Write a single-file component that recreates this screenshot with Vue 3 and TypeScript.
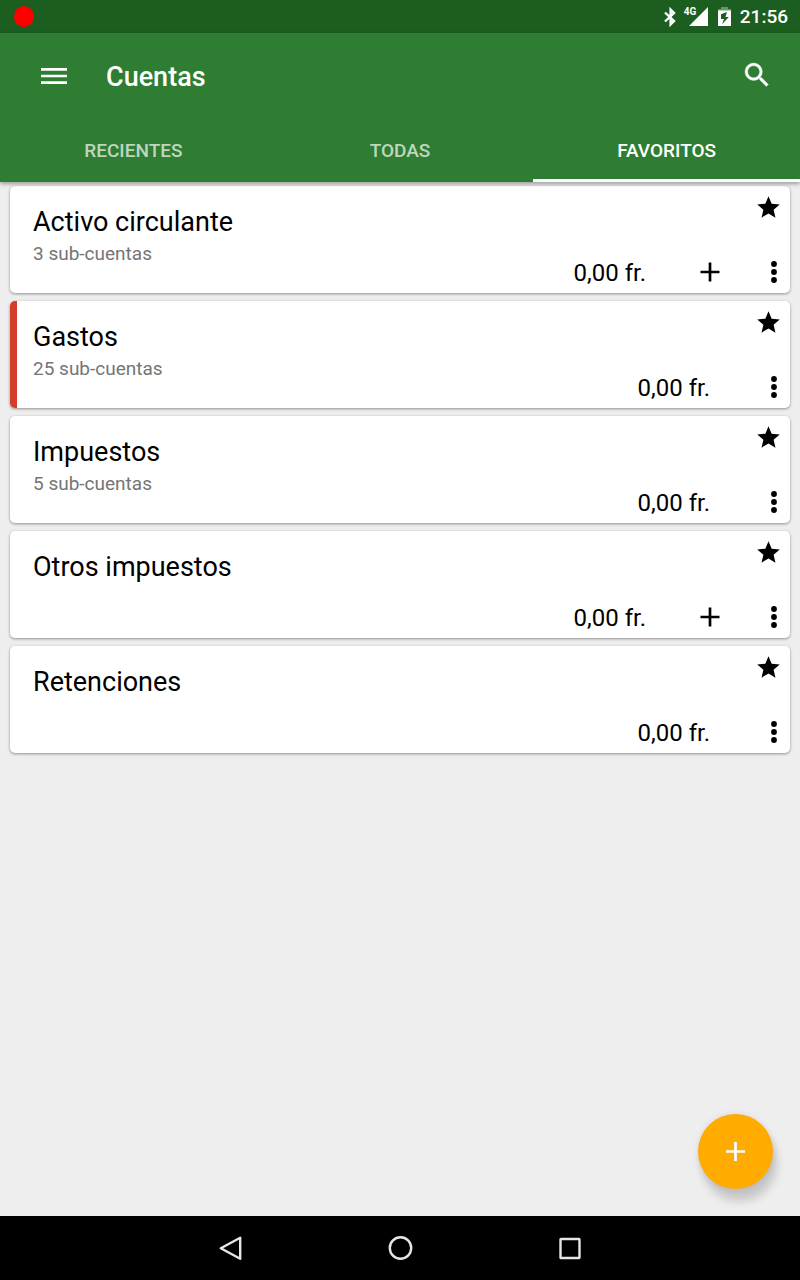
<script setup lang="ts">
import { ref } from 'vue'

interface Account {
  name: string
  children?: string
  balance: string
  canAdd: boolean
  color?: string
}

const tabs = ['Recientes', 'Todas', 'Favoritos']
const activeTab = ref(2)

const accounts: Account[] = [
  { name: 'Activo circulante', children: '3 sub-cuentas', balance: '0,00 fr.', canAdd: true },
  { name: 'Gastos', children: '25 sub-cuentas', balance: '0,00 fr.', canAdd: false, color: '#d43d2a' },
  { name: 'Impuestos', children: '5 sub-cuentas', balance: '0,00 fr.', canAdd: false },
  { name: 'Otros impuestos', balance: '0,00 fr.', canAdd: true },
  { name: 'Retenciones', balance: '0,00 fr.', canAdd: false },
]
</script>

<template>
  <div class="screen">
    <div class="status-bar">
      <span class="record-dot"></span>
      <div class="status-icons">
        <svg class="bluetooth" viewBox="0 0 12 20" width="12" height="20" aria-hidden="true">
          <path d="M1 5.5 L10 14 L6.6 17.4 V2.6 L10 6 L1 14.5" fill="none" stroke="#fff" stroke-width="2.4" />
        </svg>
        <div class="signal">
          <span class="network">4G</span>
          <svg viewBox="0 0 19 19" width="19" height="19" aria-hidden="true">
            <path d="M19 0 V19 H0 Z" fill="#fff" />
          </svg>
        </div>
        <svg class="battery" viewBox="0 0 13 19" width="13" height="19" aria-hidden="true">
          <path d="M3 0 H10 V2 H13 V4 H0 V2 H3 Z" fill="#fff" opacity="0.35" />
          <path fill-rule="evenodd" d="M0 3.5 H13 V19 H0 Z M9 5 L3 7.2 V12 H6 L4 17.2 L10.8 10 H7.4 Z" fill="#fff" />
        </svg>
        <span class="clock">21:56</span>
      </div>
    </div>

    <header class="app-bar">
      <div class="toolbar">
        <button class="icon-button" type="button" aria-label="Menú">
          <svg viewBox="0 0 32 32" width="32" height="32">
            <path d="M3 9.3 H29 M3 16 H29 M3 22.7 H29" stroke="#fff" stroke-width="2.7" />
          </svg>
        </button>
        <h1>Cuentas</h1>
        <button class="icon-button" type="button" aria-label="Buscar">
          <svg viewBox="0 0 24 24" width="32" height="32">
            <path fill="#fff" stroke="#fff" stroke-width="0.3" d="M15.5 13.3h-.79l-.28-.27A6.47 6.47 0 0 0 16 8.8 6.5 6.5 0 1 0 9.5 15.3c1.61 0 3.09-.59 4.23-1.57l.27.28v.79l5 4.99L20.49 18.3l-4.99-5zm-6 0C7.01 13.3 5 11.29 5 8.8S7.01 4.3 9.5 4.3 14 6.31 14 8.8 11.99 13.3 9.5 13.3z" />
          </svg>
        </button>
      </div>
      <nav class="tabs">
        <button
          v-for="(tab, i) in tabs"
          :key="tab"
          type="button"
          :class="['tab', { active: i === activeTab }]"
          @click="activeTab = i"
        >{{ tab }}</button>
      </nav>
    </header>

    <main>
      <ul class="accounts">
        <li v-for="account in accounts" :key="account.name" class="card">
          <span class="stripe" :style="{ backgroundColor: account.color ?? 'transparent' }"></span>
          <div class="info">
            <h2>{{ account.name }}</h2>
            <p v-if="account.children">{{ account.children }}</p>
          </div>
          <div class="side">
            <button class="star" type="button" aria-label="Favorito">
              <svg viewBox="0 0 24 24" width="27" height="27">
                <path d="M12 17.27 L18.18 21 L16.54 13.97 L22 9.24 L14.81 8.63 L12 2 L9.19 8.63 L2 9.24 L7.46 13.97 L5.82 21 Z" />
              </svg>
            </button>
            <div class="actions">
              <span class="balance">{{ account.balance }}</span>
              <button v-if="account.canAdd" class="add" type="button" aria-label="Añadir transacción">
                <svg viewBox="0 0 20 20" width="20" height="20">
                  <path d="M0.5 10 H19.5 M10 0.5 V19.5" stroke="#000" stroke-width="2.7" />
                </svg>
              </button>
              <button class="more" type="button" aria-label="Más opciones">
                <svg viewBox="0 0 8 24" width="8" height="24">
                  <circle cx="4" cy="4" r="2.9" />
                  <circle cx="4" cy="12" r="2.9" />
                  <circle cx="4" cy="20" r="2.9" />
                </svg>
              </button>
            </div>
          </div>
        </li>
      </ul>
    </main>

    <footer class="bottom">
      <button class="fab" type="button" aria-label="Crear cuenta">
        <svg viewBox="0 0 19 19" width="19" height="19">
          <path d="M0 9.5 H19 M9.5 0 V19" stroke="#fff" stroke-width="2.7" />
        </svg>
      </button>
      <nav class="system-nav">
        <button type="button" aria-label="Atrás">
          <svg viewBox="0 0 26 26" width="26" height="26">
            <path d="M23.2 2.7 V23.8 L3.8 13.3 Z" />
          </svg>
        </button>
        <button type="button" aria-label="Inicio">
          <svg viewBox="0 0 26 26" width="26" height="26">
            <circle cx="13.5" cy="13" r="10.7" />
          </svg>
        </button>
        <button type="button" aria-label="Recientes">
          <svg viewBox="0 0 26 26" width="26" height="26">
            <rect x="3.5" y="4" width="19" height="19" rx="0.5" />
          </svg>
        </button>
      </nav>
    </footer>
  </div>
</template>

<style>
body {
  margin: 0;
  background: #eeeeee;
}
</style>

<style scoped>
.screen {
  display: flex;
  flex-direction: column;
  min-height: 100vh;
  background: #eeeeee;
  color: #000;
  font-family: Roboto, "Noto Sans", sans-serif;
}

button {
  display: flex;
  align-items: center;
  justify-content: center;
  padding: 0;
  border: 0;
  background: none;
  color: inherit;
  font: inherit;
  cursor: pointer;
}

svg {
  display: block;
  flex: none;
}

h1,
h2,
p {
  margin: 0;
}

.status-bar {
  display: flex;
  align-items: center;
  justify-content: space-between;
  height: 33px;
  padding: 0 12px 0 14px;
  background: #1b5e20;
}

.record-dot {
  width: 20px;
  height: 21px;
  border-radius: 50%;
  background: #ff0000;
}

.status-icons {
  display: flex;
  align-items: center;
  color: #fff;
}

.bluetooth {
  margin-right: 8px;
}

.signal {
  position: relative;
  padding-left: 5px;
  margin-right: 10px;
}

.network {
  position: absolute;
  left: 0;
  top: 0;
  font-size: 10px;
  line-height: 10px;
  font-weight: 700;
}

.battery {
  margin-right: 9px;
}

.clock {
  padding-top: 1px;
  font-size: 19px;
  line-height: 32px;
  font-weight: 500;
}

.app-bar {
  position: relative;
  background: #2e7d32;
  color: #fff;
  box-shadow: 0 2px 4px rgba(0, 0, 0, 0.35);
}

.toolbar {
  display: flex;
  align-items: center;
  height: 85px;
  padding: 0 27px 0 38px;
}

.toolbar h1 {
  flex: 1;
  margin-left: 36px;
  padding-top: 2px;
  font-size: 27px;
  line-height: 32px;
  font-weight: 500;
}

.tabs {
  display: grid;
  grid-template-columns: repeat(3, 1fr);
}

.tab {
  height: 64px;
  border-top: 3px solid transparent;
  border-bottom: 3px solid transparent;
  color: rgba(255, 255, 255, 0.7);
  font-size: 19px;
  font-weight: 500;
  text-transform: uppercase;
}

.tab.active {
  border-bottom-color: #fff;
  color: #fff;
}

main {
  flex: 1;
}

.accounts {
  display: flex;
  flex-direction: column;
  gap: 8px;
  margin: 0;
  padding: 4px 10px;
  list-style: none;
}

.card {
  display: flex;
  min-height: 107px;
  border-radius: 5px;
  overflow: hidden;
  background: #fff;
  box-shadow: 0 1px 3px rgba(0, 0, 0, 0.4);
}

.stripe {
  flex: none;
  width: 7px;
}

.info {
  flex: 1;
  padding: 20px 0 20px 16px;
}

.info h2 {
  font-size: 27px;
  line-height: 32px;
  font-weight: 400;
}

.info p {
  font-size: 19px;
  line-height: 32px;
  color: #757575;
}

.side {
  display: flex;
  flex-direction: column;
  align-items: flex-end;
  justify-content: space-between;
}

.star {
  width: 43px;
  height: 43px;
}

.actions {
  display: flex;
  align-items: center;
  height: 42px;
}

.balance {
  margin-right: 32px;
  padding-top: 2px;
  font-size: 24px;
  line-height: 40px;
}

.add {
  width: 64px;
  height: 42px;
}

.more {
  width: 48px;
  height: 42px;
  padding-left: 16px;
}

.bottom {
  position: sticky;
  bottom: 0;
}

.fab {
  position: absolute;
  right: 27px;
  bottom: 91px;
  width: 75px;
  height: 75px;
  border-radius: 50%;
  background: #ffab00;
  box-shadow: 4px 12px 10px rgba(0, 0, 0, 0.17), 0 0 6px rgba(0, 0, 0, 0.1);
}

.system-nav {
  position: relative;
  display: flex;
  justify-content: center;
  height: 64px;
  background: #000;
}

.system-nav button {
  width: 170px;
}

.system-nav svg {
  fill: none;
  stroke: #e6e6e6;
  stroke-width: 2.4;
  stroke-linejoin: round;
}
</style>
